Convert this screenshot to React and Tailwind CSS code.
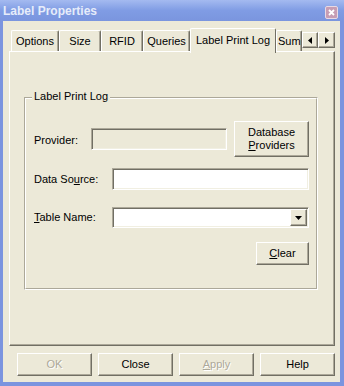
import React from "react";

// classic 3D borders (XP "Windows Classic"-ish controls inside a Luna frame)
const raised =
  "border border-t-white border-l-white border-r-[#716f64] border-b-[#716f64] shadow-[inset_-1px_-1px_0_#aca899]";
const sunken =
  "border border-t-[#aca899] border-l-[#aca899] border-r-white border-b-white shadow-[inset_1px_1px_0_#716f64,inset_-1px_-1px_0_#f1efe2]";

function Btn({ children, className = "", disabled }) {
  return (
    <div
      className={`${raised} bg-[#ece9d8] flex flex-col items-center justify-center text-center ${
        disabled ? "text-[#aca899] [text-shadow:1px_1px_0_#ffffff]" : "text-black"
      } ${className}`}
    >
      {children}
    </div>
  );
}

function Tab({ label, w, active, left }) {
  if (active) {
    return (
      <div
        className={`${w} relative z-10 h-[25px] -mb-[2px] pb-[2px] flex items-center justify-center bg-[#ece9d8] border-l border-t border-r border-l-white border-t-white border-r-[#716f64] rounded-t-[2px] whitespace-nowrap`}
      >
        {label}
      </div>
    );
  }
  return (
    <div
      className={`${w} h-[21px] flex items-center ${left ? "justify-start pl-[1px]" : "justify-center"} overflow-hidden bg-[#ece9d8] border-l border-t border-r border-l-white border-t-white border-r-[#716f64] shadow-[inset_-1px_0_0_#aca899] rounded-t-[2px] whitespace-nowrap`}
    >
      {label}
    </div>
  );
}

function Arrow({ dir, w }) {
  return (
    <div className={`${raised} ${w} h-[16px] mb-[3px] bg-[#ece9d8] flex items-center justify-center`}>
      <svg width="4" height="7" viewBox="0 0 4 7">
        {dir === "left" ? (
          <path d="M4 0 L0 3.5 L4 7 Z" fill="#000" />
        ) : (
          <path d="M0 0 L4 3.5 L0 7 Z" fill="#000" />
        )}
      </svg>
    </div>
  );
}

export default function App() {
  return (
    <div className="w-[344px] h-[386px] flex flex-col bg-[#7b94df] text-[11px] leading-none text-black font-['Liberation_Sans',Arial,sans-serif]">
      {/* title bar */}
      <div className="h-[21px] shrink-0 flex items-center justify-between pl-[3px] pr-[6px] bg-linear-to-b from-[#a4baf0] via-[#809ce4] to-[#7a95de]">
        <span className="text-[12px] font-bold text-[#e6ecfa] pt-[1px]">Label Properties</span>
        <div className="w-[13px] h-[13px] mt-[3px] rounded-[2px] border border-[#e8d9e4] bg-[#c69db4] flex items-center justify-center">
          <svg width="7" height="7" viewBox="0 0 7 7">
            <path d="M1 1 L6 6 M6 1 L1 6" stroke="#fff" strokeWidth="1.8" />
          </svg>
        </div>
      </div>

      {/* client area */}
      <div className="flex-1 flex flex-col bg-[#ece9d8] ml-[3px] mr-[4px] mb-[4px] pl-[6px] pr-[5px]">
        {/* tabs */}
        <div className="mt-[7px] ml-[2px] h-[23px] flex items-end">
          <Tab label="Options" w="w-[48px]" />
          <Tab label="Size" w="w-[42px]" />
          <Tab label="RFID" w="w-[42px]" />
          <Tab label="Queries" w="w-[47px]" />
          <Tab label="Label Print Log" w="w-[86px]" active />
          <Tab label="Sum" w="w-[26px]" left />
          <Arrow dir="left" w="w-[16px]" />
          <Arrow dir="right" w="w-[17px]" />
        </div>

        {/* tab page */}
        <div className="h-[295px] border border-l-white border-t-white border-r-[#716f64] border-b-[#716f64] shadow-[inset_-1px_-1px_0_#aca899] pt-[45px] pl-[14px]">
          <div className="relative w-[294px] h-[193px] border border-t-[#aca899] border-l-[#aca899] border-r-white border-b-white">
            <span className="absolute left-[7px] -top-[7px] px-[2px] bg-[#ece9d8]">Label Print Log</span>
            <div className="h-full border border-t-white border-l-white border-r-[#aca899] border-b-[#aca899] pt-[22px] pl-[8px] pr-[7px] flex flex-col">
              <div className="h-[36px] flex items-center">
                <span className="w-[57px] pt-[2px]">Provider:</span>
                <div className={`${sunken} w-[136px] h-[22px] bg-[#ece9d8]`} />
                <Btn className="ml-[7px] w-[75px] h-[36px] leading-[13px]">
                  <span>Database</span>
                  <span>
                    <u>P</u>roviders
                  </span>
                </Btn>
              </div>

              <div className="mt-[11px] h-[22px] flex items-center">
                <span className="w-[78px]">
                  Data So<u>u</u>rce:
                </span>
                <div className={`${sunken} w-[197px] h-[22px] bg-white`} />
              </div>

              <div className="mt-[17px] h-[21px] flex items-center">
                <span className="w-[78px]">
                  <u>T</u>able Name:
                </span>
                <div className={`${sunken} w-[197px] h-[21px] bg-white flex justify-end p-[1px]`}>
                  <Btn className="w-[17px] h-[17px]">
                    <svg width="7" height="4" viewBox="0 0 7 4">
                      <path d="M0 0 L7 0 L3.5 4 Z" fill="#000" />
                    </svg>
                  </Btn>
                </div>
              </div>

              <div className="mt-[14px] flex justify-end">
                <Btn className="w-[53px] h-[23px]">
                  <span>
                    <u>C</u>lear
                  </span>
                </Btn>
              </div>
            </div>
          </div>
        </div>

        {/* dialog buttons */}
        <div className="mt-[7px] flex justify-end gap-[6px]">
          <Btn className="w-[75px] h-[23px]" disabled>
            OK
          </Btn>
          <Btn className="w-[75px] h-[23px]">Close</Btn>
          <Btn className="w-[75px] h-[23px]" disabled>
            <span>
              <u>A</u>pply
            </span>
          </Btn>
          <Btn className="w-[75px] h-[23px]">Help</Btn>
        </div>
      </div>
    </div>
  );
}
